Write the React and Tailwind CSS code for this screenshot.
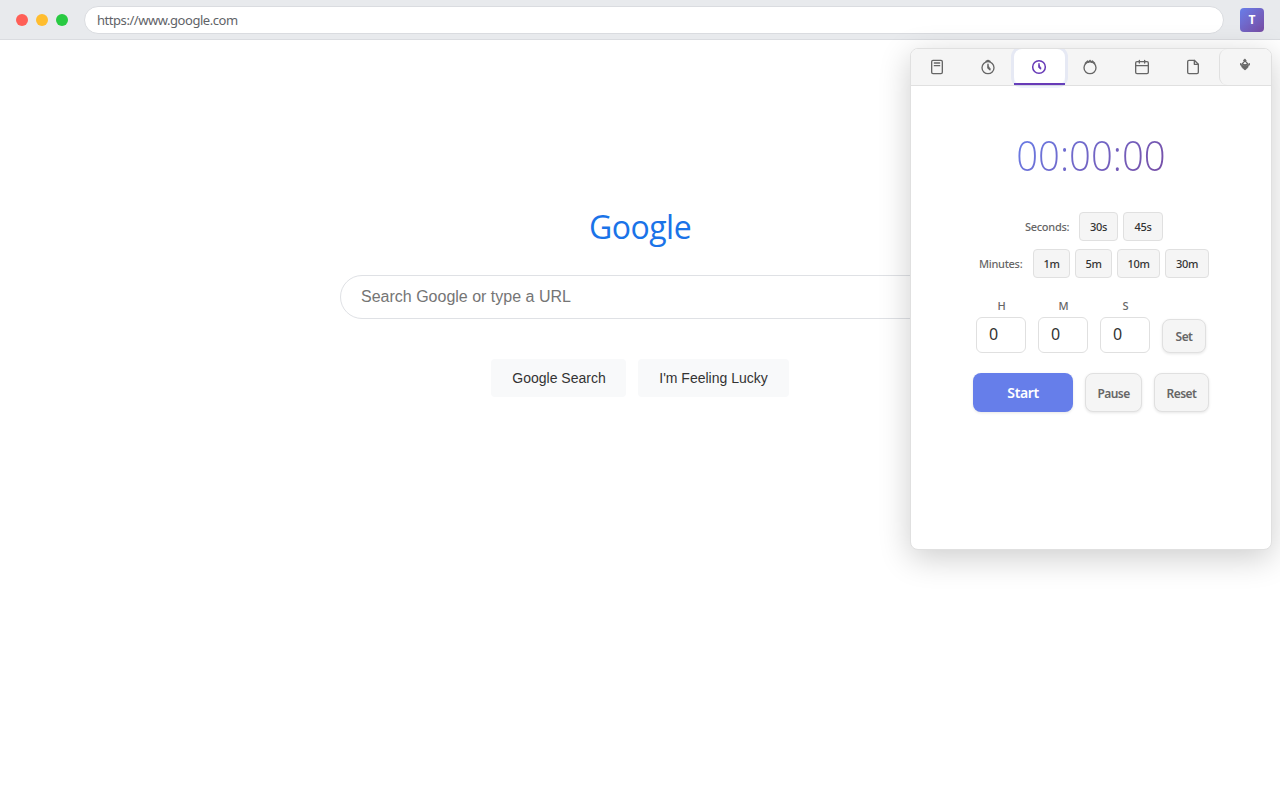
import React from "react";

const ui = "font-['Noto_Sans','Open_Sans',sans-serif]";

function Icon({ children }) {
  return (
    <svg width="16" height="16" viewBox="0 0 24 24" fill="none" stroke="currentColor" strokeWidth="2" strokeLinecap="round" strokeLinejoin="round">
      {children}
    </svg>
  );
}

const icons = [
  <Icon key="calc">
    <rect x="4" y="2" width="16" height="20" rx="2" />
    <path d="M8 6h8M8 10h8" />
  </Icon>,
  <Icon key="stopwatch">
    <circle cx="12" cy="13" r="9" />
    <path d="M12 8v5l3 3" strokeWidth="2.2" />
    <path d="M12 10.500v4h3z" fill="currentColor" strokeWidth="1" />
    <path d="M9 3.500 12 2l3 1.500z" fill="currentColor" />
  </Icon>,
  <Icon key="timer">
    <circle cx="12" cy="12" r="9.500" strokeWidth="2.300" />
    <path d="M12 7v5l2.500 2.500" strokeWidth="2.200" />
    <path d="M12 9.500v4h2.500z" fill="currentColor" strokeWidth="1" />
  </Icon>,
  <Icon key="alarm">
    <circle cx="12" cy="13" r="9" />
    <path d="M5 6.500 8.500 3l1.500 2 2-3 2 3 1.500-2L19 6.500" />
  </Icon>,
  <Icon key="calendar">
    <rect x="2.500" y="4" width="19" height="18" rx="2" />
    <path d="M16 2v4M8 2v4M2.500 10h19" />
  </Icon>,
  <Icon key="note">
    <path d="M14 2H6a2 2 0 0 0-2 2v16a2 2 0 0 0 2 2h12a2 2 0 0 0 2-2V8z" />
    <path d="M14 2v6h6" />
  </Icon>,
];

function Preset({ children, className }) {
  return (
    <button className={`h-[29px] rounded-[4px] border border-[#e0e0e0] bg-[#f5f5f5] pt-[2px] text-[11px] font-medium text-[#333] tracking-[-0.35px] ${className}`}>
      {children}
    </button>
  );
}

function Field({ label }) {
  return (
    <div className="flex w-[50px] flex-col">
      <span className="h-[20px] pl-px text-center text-[11px] leading-[17px] font-medium text-[#666]">{label}</span>
      <div className="h-[36px] rounded-[6px] border border-[#e0e0e0] bg-white pl-[12px] text-[16px] leading-[33px] text-[#333]">
        <span className="inline-block">0</span>
      </div>
    </div>
  );
}

const rowLabel = "mr-[5px] w-[44px] pt-[2px] text-[11px] font-medium tracking-[-0.3px] whitespace-nowrap text-[#666]";
const secondary = "rounded-[8px] border border-[#e0e0e0] bg-[#f5f5f5] pt-[2px] text-[12px] font-semibold tracking-[-0.55px] text-[#666] shadow-[0_1px_3px_rgba(0,0,0,0.1)]";

export default function App() {
  return (
    <div className={`relative flex h-[800px] w-[1280px] flex-col overflow-hidden bg-white ${ui}`}>
      <header className="flex h-10 shrink-0 items-center border-b border-[#dadce0] bg-[#e8eaed] px-4">
        <div className="flex gap-2">
          <span className="size-3 rounded-full bg-[#ff5f57]" />
          <span className="size-3 rounded-full bg-[#ffbd2e]" />
          <span className="size-3 rounded-full bg-[#28ca42]" />
        </div>
        <div className="ml-4 flex h-7 w-[1140px] items-center rounded-full border border-[#dadce0] bg-white px-3 text-[13px] text-[#5f6368]">
          <span className="pt-[2px] tracking-[-0.45px]">https://www.google.com</span>
        </div>
        <div className="ml-4 flex size-6 items-center justify-center rounded-[4px] bg-linear-135 from-[#667eea] to-[#764ba2] text-[12px] font-bold text-white">
          <span className="pt-px">T</span>
        </div>
      </header>

      <main className="flex flex-col items-center pt-[168px]">
        <h1 className="h-[43px] font-['Open_Sans','Noto_Sans',sans-serif] text-[32px] leading-[38px] font-normal tracking-[-0.5px] text-[#1a73e8]">Google</h1>
        <div className="mt-6 flex h-[44px] w-[600px] items-center rounded-[24px] border border-[#dfe1e5] px-5 font-['Liberation_Sans',Arial,sans-serif] text-[16px] text-[#757575]">
          Search Google or type a URL
        </div>
        <div className="mt-10 flex gap-3 font-['Liberation_Sans',Arial,sans-serif] text-[14px] text-[#333]">
          <button className="h-[38px] w-[135px] rounded-[4px] bg-[#f8f9fa] pl-px">Google Search</button>
          <button className="h-[38px] w-[151px] rounded-[4px] bg-[#f8f9fa]">I'm Feeling Lucky</button>
        </div>
      </main>

      <section className="absolute top-12 right-2 flex h-[502px] w-[362px] flex-col overflow-hidden rounded-[8px] border border-[#e0e0e0] bg-white shadow-[0_8px_32px_rgba(0,0,0,0.2)]">
        <nav className="relative flex h-[37px] shrink-0 border-b border-[#e0e0e0] bg-[#f5f5f5] text-[#666]">
          {icons.map((icon, i) => (
            <button
              key={i}
              className={
                i === 2
                  ? "z-10 flex h-[36px] flex-1 items-center justify-center rounded-t-[8px] border-b-2 border-[#673ab7] bg-white pt-[2px] text-[#673ab7]"
                  : "flex h-[36px] flex-1 items-center justify-center"
              }
            >
              {i === 2 && (
                <span className="pointer-events-none absolute top-0 left-[103px] h-[36px] w-[51px] rounded-[8px] shadow-[0_0_0_3px_rgba(102,126,234,0.1)]" />
              )}
              {icon}
            </button>
          ))}
          <button className="flex h-[36px] flex-1 items-center justify-center rounded-l-[8px] border-l border-[#e0e0e0] pb-[4px]">
            <svg width="12" height="14" viewBox="0 0 12 14" fill="none" stroke="currentColor" strokeLinejoin="round" strokeLinecap="round">
              <path d="M6 1.200 7.200 2.700H4.800z" fill="currentColor" />
              <path d="M6 3 3.200 5.600 6 7.600 8.800 5.600z" strokeWidth="1.200" />
              <path d="M1.700 5.600v1.200M10.300 5.600v1.200M2 6.800h8" strokeWidth="1.300" />
              <path d="M2.700 7.200 6 8.300 9.300 7.200 8.800 9.600 6 12 3.200 9.600z" fill="currentColor" strokeWidth=".8" />
            </svg>
          </button>
        </nav>

        <div className="flex flex-col items-center">
          <div className="mt-[40px] flex h-[58px] w-[150px] items-center justify-center">
            <span className="scale-x-[0.912] bg-linear-135 from-[#667eea] to-[#764ba2] bg-clip-text font-['Open_Sans','Noto_Sans',sans-serif] text-[42px] leading-[58px] font-light whitespace-nowrap text-transparent">
              00:00:00
            </span>
          </div>

          <div className="mt-[28px] flex h-[29px] items-center gap-[5px] pl-[6px]">
            <span className={rowLabel}>Seconds:</span>
            <Preset className="w-[39px]">30s</Preset>
            <Preset className="w-[40px]">45s</Preset>
          </div>
          <div className="mt-2 flex h-[29px] items-center gap-[5px] pl-[6px]">
            <span className={rowLabel}>Minutes:</span>
            <Preset className="w-[37px]">1m</Preset>
            <Preset className="w-[37px]">5m</Preset>
            <Preset className="w-[43px]">10m</Preset>
            <Preset className="w-[44px]">30m</Preset>
          </div>

          <div className="mt-[19px] flex items-end gap-3">
            <Field label="H" />
            <Field label="M" />
            <Field label="S" />
            <button className={`h-[34px] w-[44px] ${secondary}`}>Set</button>
          </div>

          <div className="mt-5 flex h-[39px] gap-3">
            <button className="w-[100px] rounded-[8px] bg-[#667eea] text-[14px] font-semibold tracking-[-0.4px] text-white shadow-[0_1px_3px_rgba(0,0,0,0.1)]">Start</button>
            <button className={`w-[57px] ${secondary}`}>Pause</button>
            <button className={`w-[55px] ${secondary}`}>Reset</button>
          </div>
        </div>
      </section>
    </div>
  );
}
